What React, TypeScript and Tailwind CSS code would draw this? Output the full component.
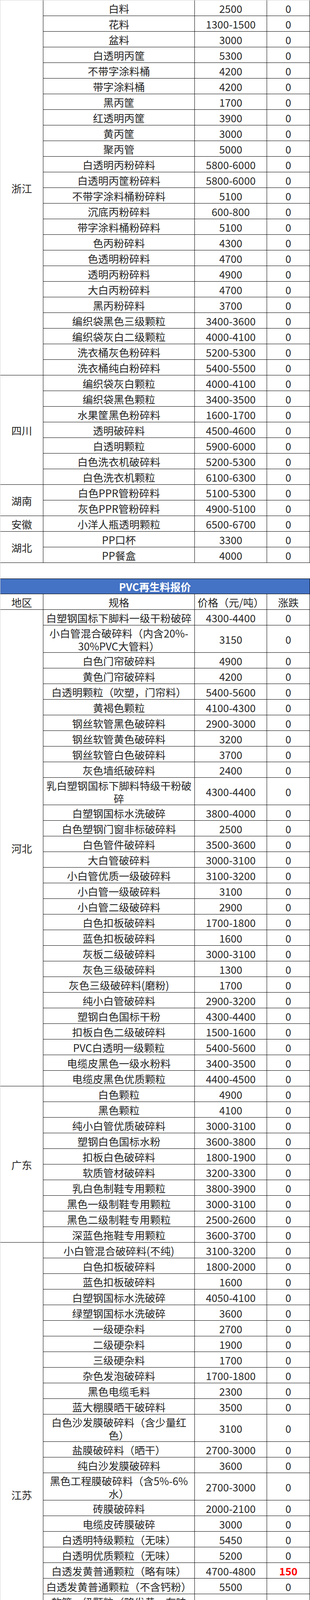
type Row = [string, string, string?];
type Group = { region: string; rows: Row[] };

// 表格数据：[规格, 价格, 涨跌]，规格里的 \n 表示两行的高单元格
const PP: Group[] = [
  {
    region: "浙江",
    rows: [
      ["白料", "2500"],
      ["花料", "1300-1500"],
      ["盆料", "3000"],
      ["白透明丙筐", "5300"],
      ["不带字涂料桶", "4200"],
      ["带字涂料桶", "4200"],
      ["黑丙筐", "1700"],
      ["红透明丙筐", "3900"],
      ["黄丙筐", "3000"],
      ["聚丙管", "5000"],
      ["白透明丙粉碎料", "5800-6000"],
      ["白透明丙筐粉碎料", "5800-6000"],
      ["不带字涂料桶粉碎料", "5100"],
      ["沉底丙粉碎料", "600-800"],
      ["带字涂料桶粉碎料", "5100"],
      ["色丙粉碎料", "4300"],
      ["色透明粉碎料", "4700"],
      ["透明丙粉碎料", "4900"],
      ["大白丙粉碎料", "4700"],
      ["黑丙粉碎料", "3700"],
      ["编织袋黑色三级颗粒", "3400-3600"],
      ["编织袋灰白二级颗粒", "4000-4100"],
      ["洗衣桶灰色粉碎料", "5200-5300"],
      ["洗衣桶纯白粉碎料", "5400-5500"],
    ],
  },
  {
    region: "四川",
    rows: [
      ["编织袋灰白颗粒", "4000-4100"],
      ["编织袋黑色颗粒", "3400-3500"],
      ["水果筐黑色粉碎料", "1600-1700"],
      ["透明破碎料", "4500-4600"],
      ["白透明颗粒", "5900-6000"],
      ["白色洗衣机破碎料", "5200-5300"],
      ["白色洗衣机颗粒", "6100-6300"],
    ],
  },
  {
    region: "湖南",
    rows: [
      ["白色PPR管粉碎料", "5100-5300"],
      ["灰色PPR管粉碎料", "4900-5100"],
    ],
  },
  { region: "安徽", rows: [["小洋人瓶透明颗粒", "6500-6700"]] },
  {
    region: "湖北",
    rows: [
      ["PP口杯", "3300"],
      ["PP餐盒", "4000"],
    ],
  },
];

const PVC: Group[] = [
  {
    region: "河北",
    rows: [
      ["白塑钢国标下脚料一级干粉破碎", "4300-4400"],
      ["小白管混合破碎料（内含20%-\n30%PVC大管料）", "3150"],
      ["白色门帘破碎料", "4900"],
      ["黄色门帘破碎料", "4200"],
      ["白透明颗粒（吹塑，门帘料）", "5400-5600"],
      ["黄褐色颗粒", "4100-4300"],
      ["钢丝软管黑色破碎料", "2900-3000"],
      ["钢丝软管黄色破碎料", "3200"],
      ["钢丝软管白色破碎料", "3700"],
      ["灰色墙纸破碎料", "2400"],
      ["乳白塑钢国标下脚料特级干粉破\n碎", "4300-4400"],
      ["白塑钢国标水洗破碎", "3800-4000"],
      ["白色塑钢门窗非标破碎料", "2500"],
      ["白色管件破碎料", "3500-3600"],
      ["大白管破碎料", "3000-3100"],
      ["小白管优质一级破碎料", "3100-3200"],
      ["小白管一级破碎料", "3100"],
      ["小白管二级破碎料", "2900"],
      ["白色扣板破碎料", "1700-1800"],
      ["蓝色扣板破碎料", "1600"],
      ["灰板二级破碎料", "3000-3100"],
      ["灰色三级破碎料", "1300"],
      ["灰色三级破碎料(磨粉)", "1700"],
      ["纯小白管破碎料", "2900-3200"],
      ["塑钢白色国标干粉", "4300-4400"],
      ["扣板白色二级破碎料", "1500-1600"],
      ["PVC白透明一级颗粒", "5400-5600"],
      ["电缆皮黑色一级水粉料", "3400-3500"],
      ["电缆皮黑色优质颗粒", "4400-4500"],
    ],
  },
  {
    region: "广东",
    rows: [
      ["白色颗粒", "4900"],
      ["黑色颗粒", "4100"],
      ["纯小白管优质破碎料", "3000-3100"],
      ["塑钢白色国标水粉", "3600-3800"],
      ["扣板白色破碎料", "1800-1900"],
      ["软质管材破碎料", "3200-3300"],
      ["乳白色制鞋专用颗粒", "3800-3900"],
      ["黑色一级制鞋专用颗粒", "3000-3100"],
      ["黑色二级制鞋专用颗粒", "2500-2600"],
      ["深蓝色拖鞋专用颗粒", "3600-3700"],
    ],
  },
  {
    region: "江苏",
    rows: [
      ["小白管混合破碎料(不纯)", "3100-3200"],
      ["白色扣板破碎料", "1800-2000"],
      ["蓝色扣板破碎料", "1600"],
      ["白塑钢国标水洗破碎", "4050-4100"],
      ["绿塑钢国标水洗破碎", "3600"],
      ["一级硬杂料", "2700"],
      ["二级硬杂料", "1900"],
      ["三级硬杂料", "1700"],
      ["杂色发泡破碎料", "1700-1800"],
      ["黑色电缆毛料", "2300"],
      ["蓝大棚膜晒干破碎料", "3500"],
      ["白色沙发膜破碎料（含少量红\n色）", "3100"],
      ["盐膜破碎料（晒干）", "2700-3000"],
      ["纯白沙发膜破碎料", "3600"],
      ["黑色工程膜破碎料（含5%-6%\n水）", "2700-3000"],
      ["砖膜破碎料", "2000-2100"],
      ["电缆皮砖膜破碎", "3000"],
      ["白透明特级颗粒（无味）", "5450"],
      ["白透明优质颗粒（无味）", "5200"],
      ["白透发黄普通颗粒（略有味）", "4700-4800", "150"],
      ["白透发黄普通颗粒（不含钙粉）", "5500"],
      ["软管一级颗粒（略发黄，有味\n道）", "4900-5000"],
      ["白色透明普通软质颗粒", "4500-4600"],
      ["白色透明优质软质颗粒", "5000-5100"],
      ["纯小白管优质破碎料", "3100-3200"],
      ["塑钢白色中标破碎料", "2350-2450"],
      ["塑钢白色国标干粉", "4300-4400"],
      ["白色扣板破碎料", "1800-2000"],
      ["PVC透明优质破碎料", "4100-4200"],
      ["门帘透明破碎料", "4300-4400"],
    ],
  },
  {
    region: "浙江",
    rows: [
      ["塑钢", "2800"],
      ["塑钢带铁", "1950"],
      ["纯小白管破碎料", "2900-3200"],
      ["塑钢干粉", "4300-4400"],
      ["扣板破碎料", "1800-1900"],
    ],
  },
  {
    region: "山东",
    rows: [
      ["纯小白管优质破碎料", "2800-2900"],
      ["塑钢白色国标干粉", "4200-4300"],
    ],
  },
  { region: "四川", rows: [["塑钢白色国标水粉", "3600-3800"]] },
  {
    region: "湖北",
    rows: [
      ["小白管破碎料", "3000-3100"],
      ["扣板白色破碎料", "1800-1900"],
      ["白色水洗非标塑钢门窗破碎", "2300-2500"],
      ["蓝色护栏破碎", "2500"],
      ["白色发泡板破碎", "3800"],
      ["小白管混合破碎", "3000-3100"],
      ["白扣板破碎（低价为现金，高价\n为欠账）", "1800-1900"],
    ],
  },
  {
    region: "福建",
    rows: [
      ["小白管粉碎料", "2900-3000"],
      ["塑钢白色国标水洗粉碎料", "3600-3800"],
      ["塑钢白色非标水洗粉碎料", "2300-2400"],
      ["扣板白色破碎料", "1800-1900"],
    ],
  },
  {
    region: "安徽",
    rows: [
      ["小白管白色普通粉碎料", "2900-3000"],
      ["扣板蓝色粉碎料", "1600-1700"],
    ],
  },
  {
    region: "河南",
    rows: [
      ["鞋底黑色颗粒", "3000-3100"],
      ["红/黄/蓝电线专用颗粒（新料，\n钙粉40%）", "4100-4200"],
      ["红/黄/蓝电线专用颗粒（新料\n50%，钙粉50%）", "3800-4000"],
      ["红/黄/蓝电线专用颗粒（二次再\n生料，钙粉30%）", "4200-4300"],
      ["白色微黄无味颗粒（3层80目，\n门帘料）", "4800-5000"],
      ["红/蓝色鞋底透明颗粒（无钙\n粉）", "5300-5500"],
      ["红/蓝色鞋底普通颗粒（钙粉\n10%左右）", "4800-4900"],
    ],
  },
];

const PE: Group[] = [
  { region: "福建", rows: [["白色透明造粒一级", "5300"]] },
  {
    region: "广东",
    rows: [
      ["LDPE白色颗粒", "5900"],
      ["LDPE黑色颗粒", "5200"],
      ["HDPE黑色粒料", "4950"],
      ["HDPE白色粒料", "5650"],
      ["低压白色一级颗粒", "5650-5750"],
      ["低压黑色一级颗粒", "4750-4950"],
      ["低压蓝色一级颗粒", "5150-5250"],
      ["高压白透明一级颗粒", "5200-5300"],
      ["高压白色一级颗粒", "5000-5100"],
      ["高压黑色一级颗粒", "4100-4200"],
      ["高压黑色二级颗粒", "3600-3700"],
      ["高压蓝色二级颗粒", "3700-3800"],
      ["白色透明造粒一级", "5200"],
    ],
  },
];

const cell =
  "flex items-center justify-center border-l border-black pt-[2px] text-center";

function PriceRow({ row }: { row: Row }) {
  const [spec, price, change = "0"] = row;
  const tall = spec.includes("\n");
  const up = change !== "0";
  return (
    <div
      className={`grid shrink-0 grid-cols-[388px_185px_111px] border-b border-black ${
        tall ? "h-[70px]" : "h-[40px]"
      }`}
    >
      <div className={`${cell} whitespace-pre-line px-[2px]`}>{spec}</div>
      <div className={cell}>{price}</div>
      <div
        className={`${cell} border-r ${up ? "font-bold text-[#ff0000]" : ""}`}
      >
        {change}
      </div>
    </div>
  );
}

function Section({ groups }: { groups: Group[] }) {
  return (
    <>
      {groups.map((g, i) => (
        <div key={g.region + i} className="flex">
          <div className="flex w-[109px] shrink-0 items-center justify-center border-b border-black pt-[2px]">
            {g.region}
          </div>
          <div className="flex flex-1 flex-col">
            {g.rows.map((r, j) => (
              <PriceRow key={j} row={r} />
            ))}
          </div>
        </div>
      ))}
    </>
  );
}

function Title({ text }: { text: string }) {
  return (
    <>
      <div className="h-[40px]" />
      <div className="flex h-[40px] items-center justify-center border-y border-r border-black bg-[#4472c4] font-bold text-white">
        {text}
      </div>
      <div className="flex h-[40px] border-b border-black">
        <div className="flex w-[109px] shrink-0 items-center justify-center pt-[2px]">
          地区
        </div>
        <div className="grid flex-1 grid-cols-[388px_185px_111px]">
          <div className={cell}>规格</div>
          <div className={cell}>价格（元/吨）</div>
          <div className={`${cell} border-r`}>涨跌</div>
        </div>
      </div>
    </>
  );
}

export default function App() {
  return (
    <div className="w-[794px] bg-white font-['Noto_Sans_CJK_SC','Noto_Sans',sans-serif] text-[26.6px] leading-[33px] text-[#262626]">
      <div className="border-l border-t border-[#d4d4d4]">
        <Section groups={PP} />
        <Title text="PVC再生料报价" />
        <Section groups={PVC} />
        <Title text="PE再生料报价" />
        <Section groups={PE} />
      </div>
    </div>
  );
}
